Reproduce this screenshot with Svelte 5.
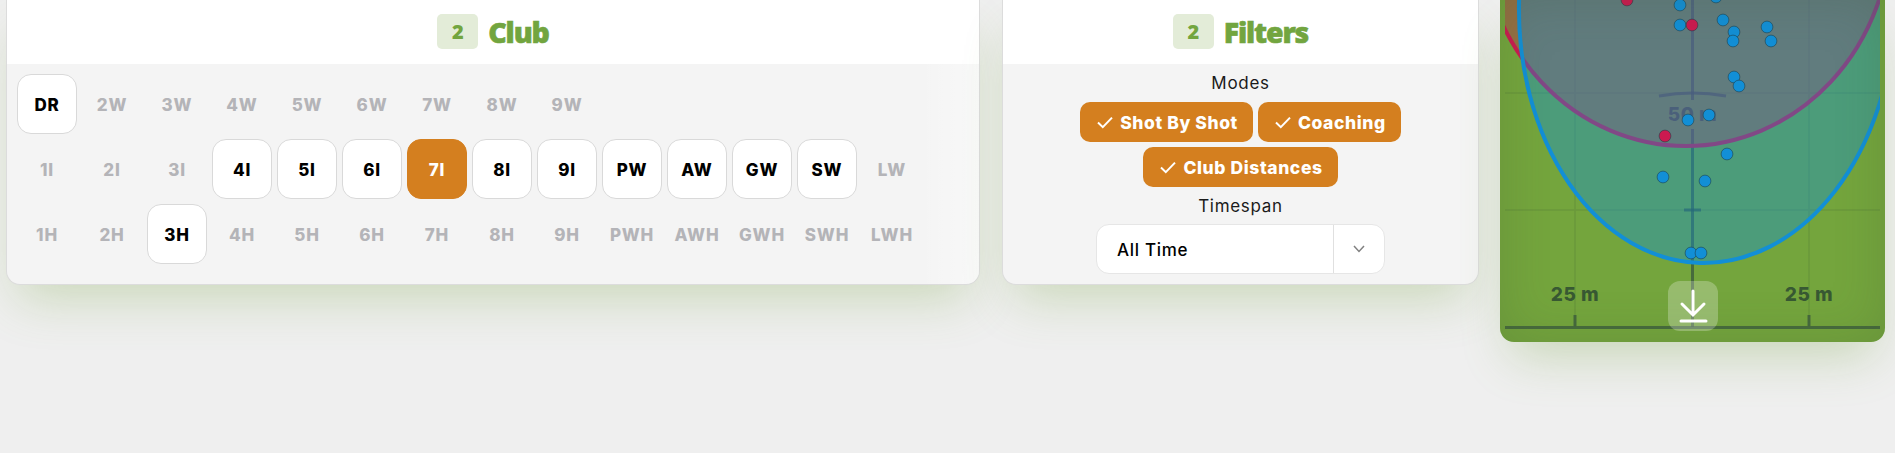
<script>
  const rows = [
    ['DR', '2W', '3W', '4W', '5W', '6W', '7W', '8W', '9W'],
    ['1I', '2I', '3I', '4I', '5I', '6I', '7I', '8I', '9I', 'PW', 'AW', 'GW', 'SW', 'LW'],
    ['1H', '2H', '3H', '4H', '5H', '6H', '7H', '8H', '9H', 'PWH', 'AWH', 'GWH', 'SWH', 'LWH']
  ]
  const available = ['DR', '4I', '5I', '6I', '7I', '8I', '9I', 'PW', 'AW', 'GW', 'SW', '3H']
  const club = '7I'
  const modes = ['Shot By Shot', 'Coaching', 'Club Distances']

  const shots = [
    [1716, -3], [1680, 5], [1680, 25], [1723, 20], [1734, 32], [1733, 41], [1767, 27], [1771, 41],
    [1734, 77], [1739, 86], [1709, 115], [1688, 120], [1727, 154], [1663, 177], [1705, 181],
    [1691, 253], [1701, 253]
  ]
  const misses = [[1627, 0], [1692, 25], [1665, 136]]
</script>

<main class="page">
  <section class="card clubs">
    <header class="head">
      <span class="step">2</span>
      <h2>Club</h2>
    </header>
    <div class="body">
      {#each rows as row}
        <div class="row">
          {#each row as c}
            <button class="club" class:on={available.includes(c)} class:sel={c === club}>{c}</button>
          {/each}
        </div>
      {/each}
    </div>
  </section>

  <section class="card filters">
    <header class="head">
      <span class="step">2</span>
      <h2>Filters</h2>
    </header>
    <div class="body center">
      <div class="label">Modes</div>
      <div class="chips">
        {#each modes as m}
          <button class="chip">
            <svg viewBox="0 0 16 16" width="16" height="16"><path d="M1 8.5 L5.8 13.2 L15 3.6" fill="none" stroke="#fff" stroke-width="2" /></svg>
            {m}
          </button>
        {/each}
      </div>
      <div class="label span">Timespan</div>
      <div class="select">
        <span class="value">All Time</span>
        <span class="arrow">
          <svg viewBox="0 0 12 8" width="12" height="8"><path d="M1 1 L6 6.5 L11 1" fill="none" stroke="#808080" stroke-width="1.5" /></svg>
        </span>
      </div>
    </div>
  </section>

  <section class="map">
    <svg viewBox="1500 0 385 342" width="385" height="342">
      <defs>
        <clipPath id="plot"><rect x="1505" y="-10" width="375" height="351" /></clipPath>
      </defs>
      <g class="grid">
        <path d="M1505 93 H1880 M1505 210 H1880 M1575 0 V327 M1809 0 V327" />
      </g>
      <g class="axis">
        <path d="M1692.5 0 V100 M1692.5 129 V327" />
        <path d="M1659 96 Q1692.5 90 1726 96" />
        <path d="M1684 210 H1701" />
        <path d="M1505 327.5 H1880 M1575 315 V327 M1809 315 V327" />
      </g>
      <text class="dist" x="1692.5" y="121">50 m</text>
      <text class="dist" x="1575" y="301">25 m</text>
      <text class="dist" x="1809" y="301">25 m</text>
      <g clip-path="url(#plot)">
        <ellipse cx="1686" cy="-74" rx="205" ry="220" fill="#cc1a50" fill-opacity=".38" stroke="#cc1a50" stroke-width="4" />
        <ellipse cx="1707" cy="5" rx="188" ry="258" transform="rotate(1.5 1707 5)" fill="#128fd6" fill-opacity=".4" stroke="#128fd6" stroke-width="4" />
      </g>
      {#each shots as [x, y]}
        <circle class="dot" cx={x} cy={y} r="5.9" fill="#128fd6" />
      {/each}
      {#each misses as [x, y]}
        <circle class="dot" cx={x} cy={y} r="5.9" fill="#cc1a50" />
      {/each}
    </svg>
    <button class="download" aria-label="Download">
      <svg viewBox="0 0 50 50" width="50" height="50">
        <path d="M25 10 V33 M14 23 L25 34 L36 23 M13 40 H38" fill="none" stroke="#fff" stroke-width="3" stroke-linecap="round" />
      </svg>
    </button>
  </section>
</main>

<style>
  :global(body) {
    background: #efefef;
    font-family: Inter, "Liberation Sans", sans-serif;
  }
  .page {
    display: flex;
    align-items: flex-start;
    height: 453px;
    box-sizing: border-box;
    padding-left: 6px;
    overflow: hidden;
  }
  .card {
    background: #f4f4f4;
    border: 1px solid #dcdcdc;
    border-top: 0;
    border-radius: 0 0 14px 14px;
    box-sizing: border-box;
    height: 285px;
    overflow: hidden;
    box-shadow: 0 25px 50px -12px rgba(115, 163, 61, .3);
  }
  .clubs { width: 974px; margin-right: 22px; }
  .filters { width: 477px; margin-right: 21px; }
  .head {
    height: 64px;
    background: #fff;
    display: flex;
    align-items: center;
    justify-content: center;
    gap: 10px;
    padding-bottom: 1px;
    box-sizing: border-box;
  }
  .step {
    width: 41px;
    height: 35px;
    background: #e3ecd8;
    border-radius: 5px;
    color: #72a53f;
    font: 800 20px "Open Sans", sans-serif;
    display: flex;
    align-items: center;
    justify-content: center;
  }
  h2 {
    margin: 0;
    color: #72a53f;
    font: 800 28.5px "Open Sans", sans-serif;
    letter-spacing: -1.2px;
    -webkit-text-stroke: .6px #72a53f;
  }
  .body { padding: 10px; }
  .clubs .body {
    height: 220px;
    box-sizing: border-box;
    background: linear-gradient(90deg, transparent 94%, rgba(255, 255, 255, .45));
  }
  .row {
    display: flex;
    gap: 5px;
    margin-bottom: 5px;
  }
  .club {
    width: 60px;
    height: 60px;
    padding: 1px 0 0;
    border: 1px solid transparent;
    border-radius: 14px;
    background: none;
    color: #b4b4b8;
    font: 800 17px Inter, sans-serif;
    letter-spacing: .8px;
  }
  .club.on {
    background: #fff;
    border-color: #d9d9d9;
    color: #000;
  }
  .club.sel {
    background: #d47f1f;
    border-color: #d47f1f;
    color: #fff;
  }
  .center {
    padding: 0;
    display: flex;
    flex-direction: column;
    align-items: center;
  }
  .label {
    height: 38px;
    line-height: 38px;
    font-size: 17px;
    color: #1a1a1a;
    letter-spacing: .7px;
  }
  .label.span {
    height: 37px;
    line-height: 38px;
  }
  .chips {
    display: flex;
    flex-wrap: wrap;
    justify-content: center;
    gap: 5px;
    width: 340px;
  }
  .chip {
    height: 40px;
    padding: 0 15px 0 17px;
    display: flex;
    align-items: center;
    gap: 7px;
    border: 0;
    border-radius: 10px;
    background: #d47f1f;
    color: #fff;
    font: 800 17.5px Inter, sans-serif;
    letter-spacing: .6px;
  }
  .select {
    width: 289px;
    height: 50px;
    box-sizing: border-box;
    display: flex;
    background: #fff;
    border: 1px solid #e6e6e6;
    border-radius: 13px;
  }
  .value {
    flex: 1;
    padding-left: 20px;
    line-height: 50px;
    font-size: 17px;
    font-weight: 500;
    letter-spacing: .7px;
    color: #000;
  }
  .arrow {
    width: 50px;
    border-left: 1px solid #e0e0e0;
    display: flex;
    align-items: center;
    justify-content: center;
  }
  .map {
    position: relative;
    width: 385px;
    height: 342px;
    background: #74a53d;
    border-radius: 0 0 14px 14px;
    overflow: hidden;
    flex: none;
    box-shadow: 0 25px 50px -12px rgba(115, 163, 61, .32);
  }
  .map::after {
    content: '';
    position: absolute;
    inset: 0;
    box-shadow: inset 0 0 50px rgba(60, 80, 50, .22);
    border-radius: inherit;
    pointer-events: none;
  }
  .map svg { display: block; }
  .grid path {
    fill: none;
    stroke: rgba(50, 80, 50, .14);
    stroke-width: 1.5;
  }
  .axis path {
    fill: none;
    stroke: rgba(50, 80, 60, .68);
    stroke-width: 3;
  }
  .dist {
    font: 800 19px Inter, sans-serif;
    letter-spacing: .5px;
    fill: rgba(45, 75, 50, .85);
    text-anchor: middle;
  }
  .dot {
    stroke: rgba(30, 60, 70, .55);
    stroke-width: 1;
  }
  .download {
    position: absolute;
    left: 168px;
    top: 281px;
    width: 50px;
    height: 50px;
    padding: 0;
    border: 0;
    border-radius: 12px;
    background: rgba(255, 255, 255, .25);
    z-index: 1;
  }
</style>
